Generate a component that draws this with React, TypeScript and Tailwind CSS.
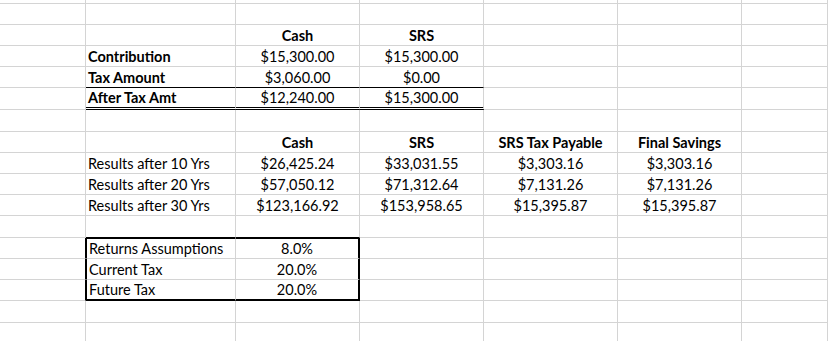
import React from 'react';

type Edge = 'gray' | 'black' | 'black2' | 'double' | 'none';

type CellSpec = {
  text?: string;
  bold?: boolean;
  center?: boolean;
  bottom?: Edge;
  right?: Edge;
  left?: Edge;
  top?: Edge;
};

const widths = ['w-[86px]', 'w-[150px]', 'w-[124px]', 'w-[124px]', 'w-[134px]', 'w-[124px]', 'w-[86px]'];

const bottomCls: Record<Edge, string> = {
  gray: 'border-b border-b-[#d4d4d4]',
  black: 'border-b border-b-black',
  black2: 'border-b-2 border-b-black',
  double: 'border-b-[3px] border-double border-b-black',
  none: '',
};

const rightCls: Record<Edge, string> = {
  gray: 'border-r border-r-[#d4d4d4]',
  black: 'border-r border-r-black',
  black2: 'border-r-2 border-r-black',
  double: 'border-r border-r-black',
  none: '',
};

const Cell: React.FC<CellSpec & { col: number }> = ({
  col,
  text,
  bold,
  center,
  bottom = 'gray',
  right = 'gray',
  left = 'none',
  top = 'none',
}) => (
  <div
    className={[
      'shrink-0 flex items-end pb-[2px] leading-none whitespace-nowrap',
      widths[col],
      bottomCls[bottom],
      rightCls[right],
      left === 'black' ? 'border-l border-l-black' : '',
      top === 'black' ? 'border-t border-t-black' : '',
      center ? 'justify-center' : 'pl-[2px]',
      bold ? 'font-bold' : '',
    ].join(' ')}
  >
    {text}
  </div>
);

const Row: React.FC<{ h: string; cells?: (CellSpec | null)[] }> = ({ h, cells = [] }) => (
  <div className={`flex ${h}`}>
    {widths.map((_, i) => (
      <Cell key={i} col={i} {...(cells[i] || {})} />
    ))}
  </div>
);

const v = (text: string, extra: CellSpec = {}): CellSpec => ({ text, center: true, ...extra });
const hd = (text: string, extra: CellSpec = {}): CellSpec => ({ text, center: true, bold: true, ...extra });

export default function App() {
  return (
    <div className="w-[828px] h-[341px] overflow-hidden bg-white text-black text-[14.5px] font-['Lato',sans-serif]">
      <Row h="h-[4px]" />
      <Row h="h-[21px]" />
      <Row h="h-[21px]" cells={[null, null, hd('Cash'), hd('SRS')]} />
      <Row
        h="h-[21px]"
        cells={[null, { text: 'Contribution', bold: true }, v('$15,300.00'), v('$15,300.00')]}
      />
      <Row
        h="h-[21px]"
        cells={[
          null,
          { text: 'Tax Amount', bold: true, bottom: 'black' },
          v('$3,060.00', { bottom: 'black' }),
          v('$0.00', { bottom: 'black' }),
        ]}
      />
      <Row
        h="h-[22px]"
        cells={[
          null,
          { text: 'After Tax Amt', bold: true, bottom: 'double' },
          v('$12,240.00', { bottom: 'double' }),
          v('$15,300.00', { bottom: 'double' }),
        ]}
      />
      <Row h="h-[22px]" />
      <Row
        h="h-[21px]"
        cells={[null, null, hd('Cash'), hd('SRS'), hd('SRS Tax Payable'), hd('Final Savings')]}
      />
      <Row
        h="h-[21px]"
        cells={[null, { text: 'Results after 10 Yrs' }, v('$26,425.24'), v('$33,031.55'), v('$3,303.16'), v('$3,303.16')]}
      />
      <Row
        h="h-[21px]"
        cells={[null, { text: 'Results after 20 Yrs' }, v('$57,050.12'), v('$71,312.64'), v('$7,131.26'), v('$7,131.26')]}
      />
      <Row
        h="h-[21px]"
        cells={[null, { text: 'Results after 30 Yrs' }, v('$123,166.92'), v('$153,958.65'), v('$15,395.87'), v('$15,395.87')]}
      />
      <Row h="h-[22px]" cells={[null, { bottom: 'black' }, { bottom: 'black' }]} />
      <Row
        h="h-[21px]"
        cells={[
          { right: 'black' },
          { text: 'Returns Assumptions', left: 'black', top: 'black' },
          v('8.0%', { right: 'black2', top: 'black' }),
        ]}
      />
      <Row
        h="h-[21px]"
        cells={[{ right: 'black' }, { text: 'Current Tax', left: 'black' }, v('20.0%', { right: 'black2' })]}
      />
      <Row
        h="h-[21px]"
        cells={[
          { right: 'black' },
          { text: 'Future Tax', left: 'black', bottom: 'black2' },
          v('20.0%', { right: 'black2', bottom: 'black2' }),
        ]}
      />
      <Row h="h-[22px]" />
      <Row h="h-[22px]" />
    </div>
  );
}
